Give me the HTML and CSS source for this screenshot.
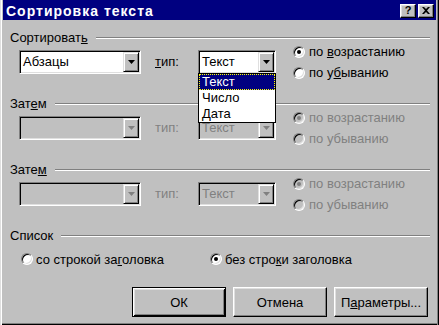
FILE: index.html
```html
<!DOCTYPE html>
<html lang="ru">
<head>
  <meta charset="UTF-8" />
  <meta name="viewport" content="width=device-width, initial-scale=1.0" />
  <title>Сортировка текста</title>
  <link rel="stylesheet" href="styles.css">
</head>
<body>
  <div class="window">
    <div class="titlebar">
      <span class="title">Сортировка текста</span>
      <div class="tbtns">
        <span class="tbtn">?</span>
        <span class="tbtn">
          <svg width="8" height="7" viewBox="0 0 8 7"><path d="M0 0h2l2 2 2-2h2L5 3.5 8 7H6L4 5 2 7H0l3-3.5z" fill="#000"/></svg>
        </span>
      </div>
    </div>

    <div class="content">
      <section class="group">
        <div class="legend"><span>Сортироват<u>ь</u></span></div>
        <div class="sort-row">
          <div class="combo wide">
            <span class="value">Абзацы</span>
            <span class="drop"><svg width="7" height="4" viewBox="0 0 7 4"><path d="M0 0h7L3.5 4z"/></svg></span>
          </div>
          <span class="type-label"><u>т</u>ип:</span>
          <div class="combo narrow">
            <span class="value">Текст</span>
            <span class="drop"><svg width="7" height="4" viewBox="0 0 7 4"><path d="M0 0h7L3.5 4z"/></svg></span>
            <ul class="list">
              <li class="selected">Текст</li>
              <li>Число</li>
              <li>Дата</li>
            </ul>
          </div>
          <div class="radios">
            <label class="radio-item"><span class="radio checked"></span><span>по <u>в</u>озрастанию</span></label>
            <label class="radio-item"><span class="radio"></span><span>по у<u>б</u>ыванию</span></label>
          </div>
        </div>
      </section>

      <section class="group">
        <div class="legend"><span>Зат<u>е</u>м</span></div>
        <div class="sort-row disabled">
          <div class="combo wide">
            <span class="value"></span>
            <span class="drop"><svg width="7" height="4" viewBox="0 0 7 4"><path d="M0 0h7L3.5 4z"/></svg></span>
          </div>
          <span class="type-label">тип:</span>
          <div class="combo narrow">
            <span class="value">Текст</span>
            <span class="drop"><svg width="7" height="4" viewBox="0 0 7 4"><path d="M0 0h7L3.5 4z"/></svg></span>
          </div>
          <div class="radios">
            <label class="radio-item"><span class="radio checked"></span><span>по возрастанию</span></label>
            <label class="radio-item"><span class="radio"></span><span>по убыванию</span></label>
          </div>
        </div>
      </section>

      <section class="group">
        <div class="legend"><span>Зате<u>м</u></span></div>
        <div class="sort-row disabled">
          <div class="combo wide">
            <span class="value"></span>
            <span class="drop"><svg width="7" height="4" viewBox="0 0 7 4"><path d="M0 0h7L3.5 4z"/></svg></span>
          </div>
          <span class="type-label">тип:</span>
          <div class="combo narrow">
            <span class="value">Текст</span>
            <span class="drop"><svg width="7" height="4" viewBox="0 0 7 4"><path d="M0 0h7L3.5 4z"/></svg></span>
          </div>
          <div class="radios">
            <label class="radio-item"><span class="radio checked"></span><span>по возрастанию</span></label>
            <label class="radio-item"><span class="radio"></span><span>по убыванию</span></label>
          </div>
        </div>
      </section>

      <section class="list-group">
        <div class="legend"><span>Список</span></div>
        <div class="header-row">
          <label class="radio-item first"><span class="radio"></span><span>со строкой за<u>г</u>оловка</span></label>
          <label class="radio-item"><span class="radio checked"></span><span>без стро<u>к</u>и заголовка</span></label>
        </div>
      </section>

      <div class="buttons">
        <button class="btn default">ОК</button>
        <button class="btn">Отмена</button>
        <button class="btn">П<u>а</u>раметры...</button>
      </div>
    </div>
  </div>
</body>
</html>
```

FILE: styles.css
```css
body {
  margin: 0;
  font-family: "Liberation Sans", Arial, sans-serif;
  font-size: 13px;
  color: #000;
  background: #c0c0c0;
}

.window {
  width: 439px;
  height: 325px;
  box-sizing: border-box;
  padding: 0 3px 3px 3px;
  background: #c0c0c0;
  box-shadow: inset 1px 0 #dfdfdf, inset 2px 0 #fff,
    inset -1px 0 #000, inset -2px 0 #808080,
    inset 0 -1px #000, inset 0 -2px #808080;
}

/* title bar */
.titlebar {
  height: 20px;
  background: #000080;
  color: #fff;
  display: flex;
  align-items: center;
  justify-content: space-between;
  padding: 0 2px 0 3px;
}
.title {
  font-weight: bold;
  font-size: 14px;
  letter-spacing: 1px;
  padding-top: 2px;
}
.tbtns {
  display: flex;
  gap: 2px;
  padding-top: 1px;
}
.tbtn {
  width: 16px;
  height: 14px;
  box-sizing: border-box;
  background: #c0c0c0;
  border: 1px solid;
  border-color: #fff #000 #000 #fff;
  box-shadow: inset -1px -1px #808080, inset 1px 1px #dfdfdf;
  display: flex;
  align-items: center;
  justify-content: center;
  color: #000;
  font-weight: bold;
  font-size: 11px;
  line-height: 1;
}

/* body */
.content {
  padding: 11px 6px 0 7px;
}
.group {
  height: 66px;
}
.legend {
  display: flex;
  align-items: center;
  gap: 8px;
  height: 14px;
  line-height: 14px;
}
.legend::after {
  content: "";
  flex: 1;
  border-top: 1px solid #808080;
  border-bottom: 1px solid #fff;
}
u {
  text-decoration: underline;
  text-underline-offset: 1px;
}

.sort-row {
  display: flex;
  align-items: flex-start;
  margin-top: 5px;
  padding-left: 9px;
}
.type-label {
  width: 43px;
  margin-left: 14px;
  line-height: 24px;
}

/* combo boxes */
.combo {
  position: relative;
  height: 24px;
  box-sizing: border-box;
  display: flex;
  background: #fff;
  border: 1px solid;
  border-color: #808080 #fff #fff #808080;
  box-shadow: inset 1px 1px #000, inset -1px -1px #dfdfdf;
  padding: 1px;
}
.combo.wide {
  width: 122px;
}
.combo.narrow {
  width: 78px;
}
.combo .value {
  flex: 1;
  padding-left: 2px;
  line-height: 20px;
}
.drop {
  width: 16px;
  height: 20px;
  box-sizing: border-box;
  background: #c0c0c0;
  border: 1px solid;
  border-color: #dfdfdf #000 #000 #dfdfdf;
  box-shadow: inset 1px 1px #fff, inset -1px -1px #808080;
  display: flex;
  align-items: center;
  justify-content: center;
}
.drop svg {
  fill: #000;
}

.list {
  position: absolute;
  top: 100%;
  left: -1px;
  width: 78px;
  box-sizing: border-box;
  margin: 0;
  padding: 0;
  list-style: none;
  background: #fff;
  border: 1px solid #000;
  z-index: 2;
}
.list li {
  height: 16px;
  line-height: 16px;
  padding-left: 3px;
}
.list li.selected {
  background: #000080;
  color: #fff;
  outline: 1px dotted #ffff00;
  outline-offset: -1px;
}

/* radios */
.radios {
  margin-left: 17px;
  margin-top: -9px;
}
.radio-item {
  display: flex;
  align-items: center;
  gap: 4px;
  height: 21px;
}
.radio {
  position: relative;
  flex: none;
  width: 12px;
  height: 12px;
  box-sizing: border-box;
  border-radius: 50%;
  border: 1px solid;
  border-color: #808080 #fff #fff #808080;
  background: #fff;
  box-shadow: inset 1px 1px #000, inset -1px -1px #dfdfdf;
}
.radio.checked::after {
  content: "";
  position: absolute;
  left: 3px;
  top: 3px;
  width: 4px;
  height: 4px;
  border-radius: 50%;
  background: #000;
}

/* disabled rows */
.disabled {
  color: #808080;
}
.disabled .combo,
.disabled .radio {
  background: #c0c0c0;
}
.disabled .drop svg {
  fill: #808080;
}
.disabled .radio.checked::after {
  background: #808080;
}

/* header option */
.header-row {
  display: flex;
  margin-top: 6px;
  padding-left: 11px;
}
.header-row .radio-item {
  height: 20px;
  gap: 3px;
}
.header-row .first {
  width: 189px;
}

/* buttons */
.buttons {
  display: flex;
  justify-content: flex-end;
  gap: 7px;
  margin-top: 18px;
  padding-right: 2px;
}
.btn {
  width: 94px;
  height: 30px;
  background: #c0c0c0;
  font-family: inherit;
  font-size: 13px;
  color: #000;
  border: 1px solid;
  border-color: #fff #000 #000 #fff;
  box-shadow: inset -1px -1px #808080, inset 1px 1px #dfdfdf;
  padding: 0;
}
.btn.default {
  border-color: #000;
  box-shadow: inset 1px 1px #fff, inset -1px -1px #000,
    inset 2px 2px #dfdfdf, inset -2px -2px #808080;
}
```
